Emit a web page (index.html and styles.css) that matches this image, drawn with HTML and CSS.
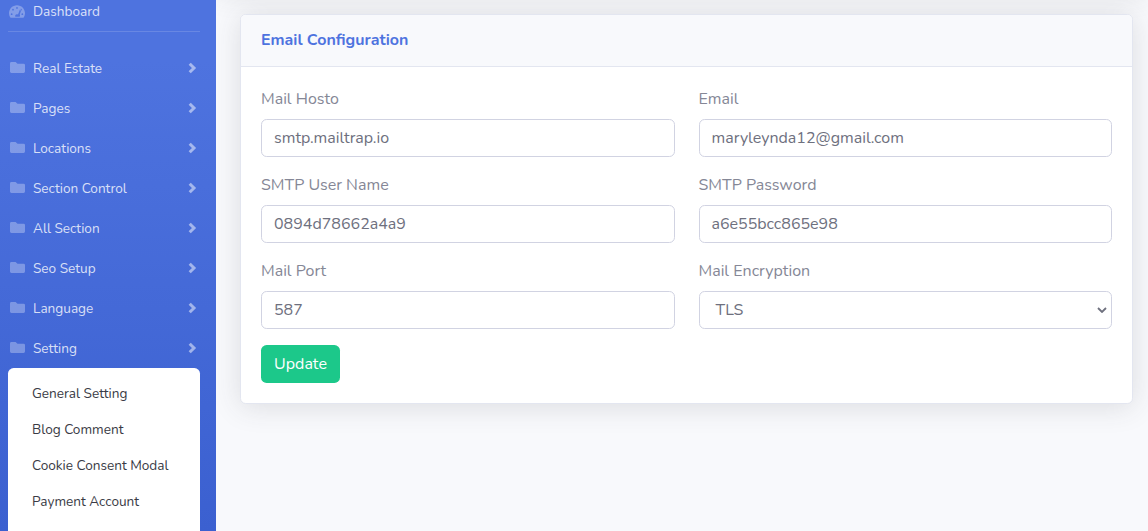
FILE: index.html
```html
<!DOCTYPE html>
<html lang="en">
<head>
<meta charset="utf-8">
<title>Email Configuration</title>
<link rel="stylesheet" href="styles.css">
</head>
<body>
<svg class="sprite" aria-hidden="true">
  <symbol id="folder" viewBox="0 0 15 11"><path d="M1.400 0H5.600l1.900 1.700h6.100A1.400 1.400 0 0 1 15 3.100v6.500A1.400 1.400 0 0 1 13.600 11H1.400A1.400 1.400 0 0 1 0 9.600V1.400A1.400 1.400 0 0 1 1.400 0z"/></symbol>
  <symbol id="chevron" viewBox="0 0 9 12"><path d="M1.700 1.700L6 6l-4.300 4.300"/></symbol>
  <symbol id="gauge" viewBox="0 0 576 512"><path fill-rule="evenodd" d="M288 32C129 32 0 161 0 320c0 53 14 102 39 145 6 9 16 15 27 15h444c11 0 21-6 27-15 25-43 39-92 39-145C576 161 447 32 288 32zM288 96a32 32 0 1 1 0 64 32 32 0 0 1 0-64zM96 384a32 32 0 1 1 0-64 32 32 0 0 1 0 64zm48-160a32 32 0 1 1 0-64 32 32 0 0 1 0 64zm247-31c4-13 17-20 30-16 13 4 20 18 16 30l-50 154c15 17 12 50-5 87H229c-23-43 5-94 54-96 16 0 30 4 42 12zM432 224a32 32 0 1 1 0-64 32 32 0 0 1 0 64zm48 160a32 32 0 1 1 0-64 32 32 0 0 1 0 64z"/></symbol>
</svg>
<div class="page">
  <nav class="sidebar">
    <a class="nav-link dashboard"><svg class="icon gauge"><use href="#gauge"/></svg><span>Dashboard</span></a>
    <hr class="divider">
    <a class="nav-link"><svg class="icon"><use href="#folder"/></svg><span>Real Estate</span><svg class="arrow"><use href="#chevron"/></svg></a>
    <a class="nav-link"><svg class="icon"><use href="#folder"/></svg><span>Pages</span><svg class="arrow"><use href="#chevron"/></svg></a>
    <a class="nav-link"><svg class="icon"><use href="#folder"/></svg><span>Locations</span><svg class="arrow"><use href="#chevron"/></svg></a>
    <a class="nav-link"><svg class="icon"><use href="#folder"/></svg><span>Section Control</span><svg class="arrow"><use href="#chevron"/></svg></a>
    <a class="nav-link"><svg class="icon"><use href="#folder"/></svg><span>All Section</span><svg class="arrow"><use href="#chevron"/></svg></a>
    <a class="nav-link"><svg class="icon"><use href="#folder"/></svg><span>Seo Setup</span><svg class="arrow"><use href="#chevron"/></svg></a>
    <a class="nav-link"><svg class="icon"><use href="#folder"/></svg><span>Language</span><svg class="arrow"><use href="#chevron"/></svg></a>
    <a class="nav-link"><svg class="icon"><use href="#folder"/></svg><span>Setting</span><svg class="arrow"><use href="#chevron"/></svg></a>
    <div class="submenu">
      <a>General Setting</a>
      <a>Blog Comment</a>
      <a>Cookie Consent Modal</a>
      <a>Payment Account</a>
    </div>
  </nav>
  <main class="content">
    <div class="topbar"></div>
    <section class="card">
      <h6 class="card-header">Email Configuration</h6>
      <form class="card-body">
        <div class="fields">
          <div class="group"><label>Mail Hosto</label><div class="control">smtp.mailtrap.io</div></div>
          <div class="group"><label>Email</label><div class="control">maryleynda12@gmail.com</div></div>
          <div class="group"><label>SMTP User Name</label><div class="control">0894d78662a4a9</div></div>
          <div class="group"><label>SMTP Password</label><div class="control">a6e55bcc865e98</div></div>
          <div class="group"><label>Mail Port</label><div class="control">587</div></div>
          <div class="group"><label>Mail Encryption</label><div class="control select"><span>TLS</span><svg class="caret" viewBox="0 0 10 6"><path d="M1 1l4 4 4-4"/></svg></div></div>
        </div>
        <button type="button" class="btn">Update</button>
      </form>
    </section>
  </main>
</div>
</body>
</html>
```
FILE: styles.css
```css
* { box-sizing: border-box; }
body {
  margin: 0;
  font: 400 16px/24px Nunito, Lato, sans-serif;
  color: #858796;
  background: #f8f9fc;
}
.sprite { display: none; }
.page { display: flex; height: 531px; overflow: hidden; }

.sidebar {
  flex: 0 0 216px;
  padding: 0 16px 0 8px;
  overflow: hidden;
  background: linear-gradient(180deg, #4e73df 0, #4e73df 60px, #3b60d0 531px);
}
.nav-link {
  display: flex;
  align-items: center;
  height: 40px;
  font-size: 13.6px;
  line-height: 20px;
  color: rgba(255, 255, 255, .8);
  white-space: nowrap;
}
.nav-link span { padding-top: 2px; }
.nav-link.dashboard { height: 31px; padding-bottom: 8px; }
.nav-link.dashboard span { padding-top: 0; }
.icon { width: 15px; height: 11px; margin: 0 8.500px 1px 1.500px; fill: rgba(255, 255, 255, .3); }
.icon.gauge { width: 16px; height: 15px; margin: 0 8px 1px 1px; }
.arrow {
  width: 9px;
  height: 12px;
  margin: 0 3px 0 auto;
  fill: none;
  stroke: rgba(255, 255, 255, .5);
  stroke-width: 3;
}
.divider { height: 1px; margin: 0 0 16px; border: 0; background: rgba(255, 255, 255, .15); }

.submenu {
  height: 300px;
  padding: 8px;
  border-radius: 5.6px;
  background: #fff;
  font-size: 13.6px;
  color: #3a3b45;
}
.submenu a { display: flex; align-items: center; height: 36px; padding: 0 16px; white-space: nowrap; }

.content { flex: 1; min-width: 0; padding: 0 15px 0 24px; overflow: hidden; }
.topbar {
  height: 70px;
  margin: -80px -15px 24px -24px;
  background: #fff;
  box-shadow: 0 2.4px 28px rgba(58, 59, 69, .15);
}
.card {
  height: 390px;
  border: 1px solid #e3e6f0;
  border-radius: 5.6px;
  background: #fff;
  box-shadow: 0 2.4px 28px rgba(58, 59, 69, .15);
}
.card-header {
  margin: 0;
  height: 52px;
  padding: 13px 20px 0;
  border-bottom: 1px solid #e3e6f0;
  border-radius: 4.6px 4.6px 0 0;
  background: #f8f9fc;
  font-size: 16px;
  line-height: 24px;
  font-weight: 700;
  color: #4e73df;
}
.card-body { padding: 20px; }
.fields { display: grid; grid-template-columns: 1fr 1fr; gap: 16px 24px; }
.group label { display: block; margin-bottom: 8px; }
.control {
  display: flex;
  align-items: center;
  height: 38px;
  padding: 0 12px;
  border: 1px solid #d1d3e2;
  border-radius: 5.6px;
  background: #fff;
  color: #6e707e;
}
.select { justify-content: space-between; padding: 0 4px 0 16px; }
.caret { width: 10px; height: 6px; fill: none; stroke: #6e707e; stroke-width: 1.8; }
.btn {
  height: 38px;
  margin-top: 16px;
  padding: 0 13px;
  border: 0;
  border-radius: 5.6px;
  background: #1cc88a;
  color: #fff;
  font: inherit;
  width: 79px;
  white-space: nowrap;
}
```
